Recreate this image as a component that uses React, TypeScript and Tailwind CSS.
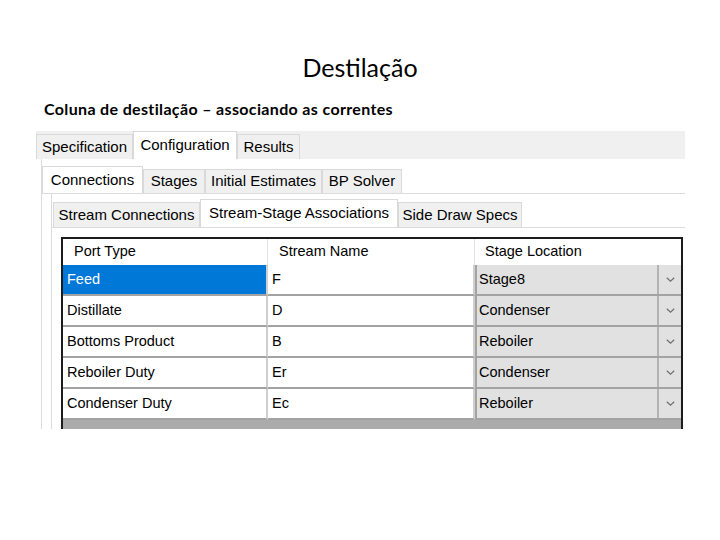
import type { ReactNode } from "react";

type TabProps = {
	label: string;
	width: string;
	selected?: boolean;
};

// Classic WinForms style tab: selected ones are white and 2px taller
function Tab({ label, width, selected = false }: TabProps) {
	return (
		<div
			className={`${width} flex items-center justify-center border border-b-0 border-[#d9d9d9] text-[15px] leading-none text-black ${
				selected ? "h-full bg-white" : "h-[calc(100%-3px)] bg-[#f0f0f0]"
			}`}
		>
			<span className="-mt-[2px]">{label}</span>
		</div>
	);
}

type Row = {
	port: string;
	stream: string;
	stage: string;
};

const rows: Row[] = [
	{ port: "Feed", stream: "F", stage: "Stage8" },
	{ port: "Distillate", stream: "D", stage: "Condenser" },
	{ port: "Bottoms Product", stream: "B", stage: "Reboiler" },
	{ port: "Reboiler Duty", stream: "Er", stage: "Condenser" },
	{ port: "Condenser Duty", stream: "Ec", stage: "Reboiler" },
];

function Chevron() {
	return (
		<svg width="9" height="5" viewBox="0 0 9 5" className="text-[#6f6f6f]">
			<polyline
				points="0.8,0.8 4.5,4.2 8.2,0.8"
				fill="none"
				stroke="currentColor"
				strokeWidth="1.2"
			/>
		</svg>
	);
}

function Cell({
	children,
	className = "",
}: {
	children: ReactNode;
	className?: string;
}) {
	return (
		<div
			className={`flex h-[31px] items-center border-b-2 border-r-2 border-b-[#a3a3a3] border-r-[#cfcfcf] pl-[4px] text-[14.5px] ${className}`}
		>
			{children}
		</div>
	);
}

function StreamGrid() {
	return (
		<div className="h-[260px] w-[622px] border-2 border-[#1c1c1c] bg-[#ababab]">
			<div className="grid grid-cols-[205px_207px_206px] font-['Liberation_Sans',Arial,sans-serif] text-black">
				{/* header */}
				<div className="flex h-[26px] items-center border-r border-[#e3e3e3] bg-white pl-[11px] text-[14.5px]">
					Port Type
				</div>
				<div className="flex h-[26px] items-center border-r border-[#e3e3e3] bg-white pl-[11px] text-[14.5px]">
					Stream Name
				</div>
				<div className="flex h-[26px] items-center bg-white pl-[10px] text-[14.5px]">
					Stage Location
				</div>

				{rows.map((row, i) => (
					<div key={row.port} className="contents">
						<Cell
							className={
								i === 0 ? "bg-[#0078d7] text-white" : "bg-white text-black"
							}
						>
							{row.port}
						</Cell>
						<Cell className="bg-white">{row.stream}</Cell>
						<div className="flex h-[31px] border-b-2 border-[#a3a3a3] bg-[#e1e1e1]">
							<div className="flex flex-1 items-center border-l-2 border-[#a3a3a3] pl-[2px] text-[14.5px]">
								{row.stage}
							</div>
							<div className="flex w-[24px] items-center justify-center border-l-2 border-[#b3b3b3]">
								<Chevron />
							</div>
						</div>
					</div>
				))}
			</div>
		</div>
	);
}

export default function App() {
	return (
		<div className="h-[540px] w-[720px] overflow-hidden bg-white">
			<h1 className="pt-[51px] text-center font-['Lato','Liberation_Sans',sans-serif] text-[25px] leading-[32px] text-black">
				Destilação
			</h1>
			<p className="ml-[44px] mt-[16px] font-['Lato','Liberation_Sans',sans-serif] text-[16px] font-bold leading-[20px] tracking-[0.35px] text-black">
				Coluna de destilação – associando as correntes
			</p>

			{/* screenshot of the column configuration dialog */}
			<div className="ml-[36px] mt-[12px] h-[298px] w-[649px] overflow-hidden font-['Liberation_Sans',Arial,sans-serif]">
				<div className="flex h-[28px] items-end bg-[#f0f0f0]">
					<Tab label="Specification" width="w-[97px]" />
					<Tab label="Configuration" width="w-[104px]" selected />
					<Tab label="Results" width="w-[63px]" />
				</div>

				<div className="ml-[5px] h-full border-l border-[#dcdcdc] pt-[7px]">
					<div className="flex h-[28px] items-end border-b border-[#dcdcdc]">
						<Tab label="Connections" width="w-[101px]" selected />
						<Tab label="Stages" width="w-[62px]" />
						<Tab label="Initial Estimates" width="w-[117px]" />
						<Tab label="BP Solver" width="w-[80px]" />
					</div>

					<div className="ml-[9px] h-full border-l border-[#dcdcdc] pt-[5px]">
						<div className="flex h-[29px] items-end border-b border-[#dcdcdc] pl-[1px]">
							<Tab label="Stream Connections" width="w-[147px]" />
							<Tab
								label="Stream-Stage Associations"
								width="w-[198px]"
								selected
							/>
							<Tab label="Side Draw Specs" width="w-[124px]" />
						</div>

						<div className="pl-[9px] pt-[9px]">
							<StreamGrid />
						</div>
					</div>
				</div>
			</div>
		</div>
	);
}
